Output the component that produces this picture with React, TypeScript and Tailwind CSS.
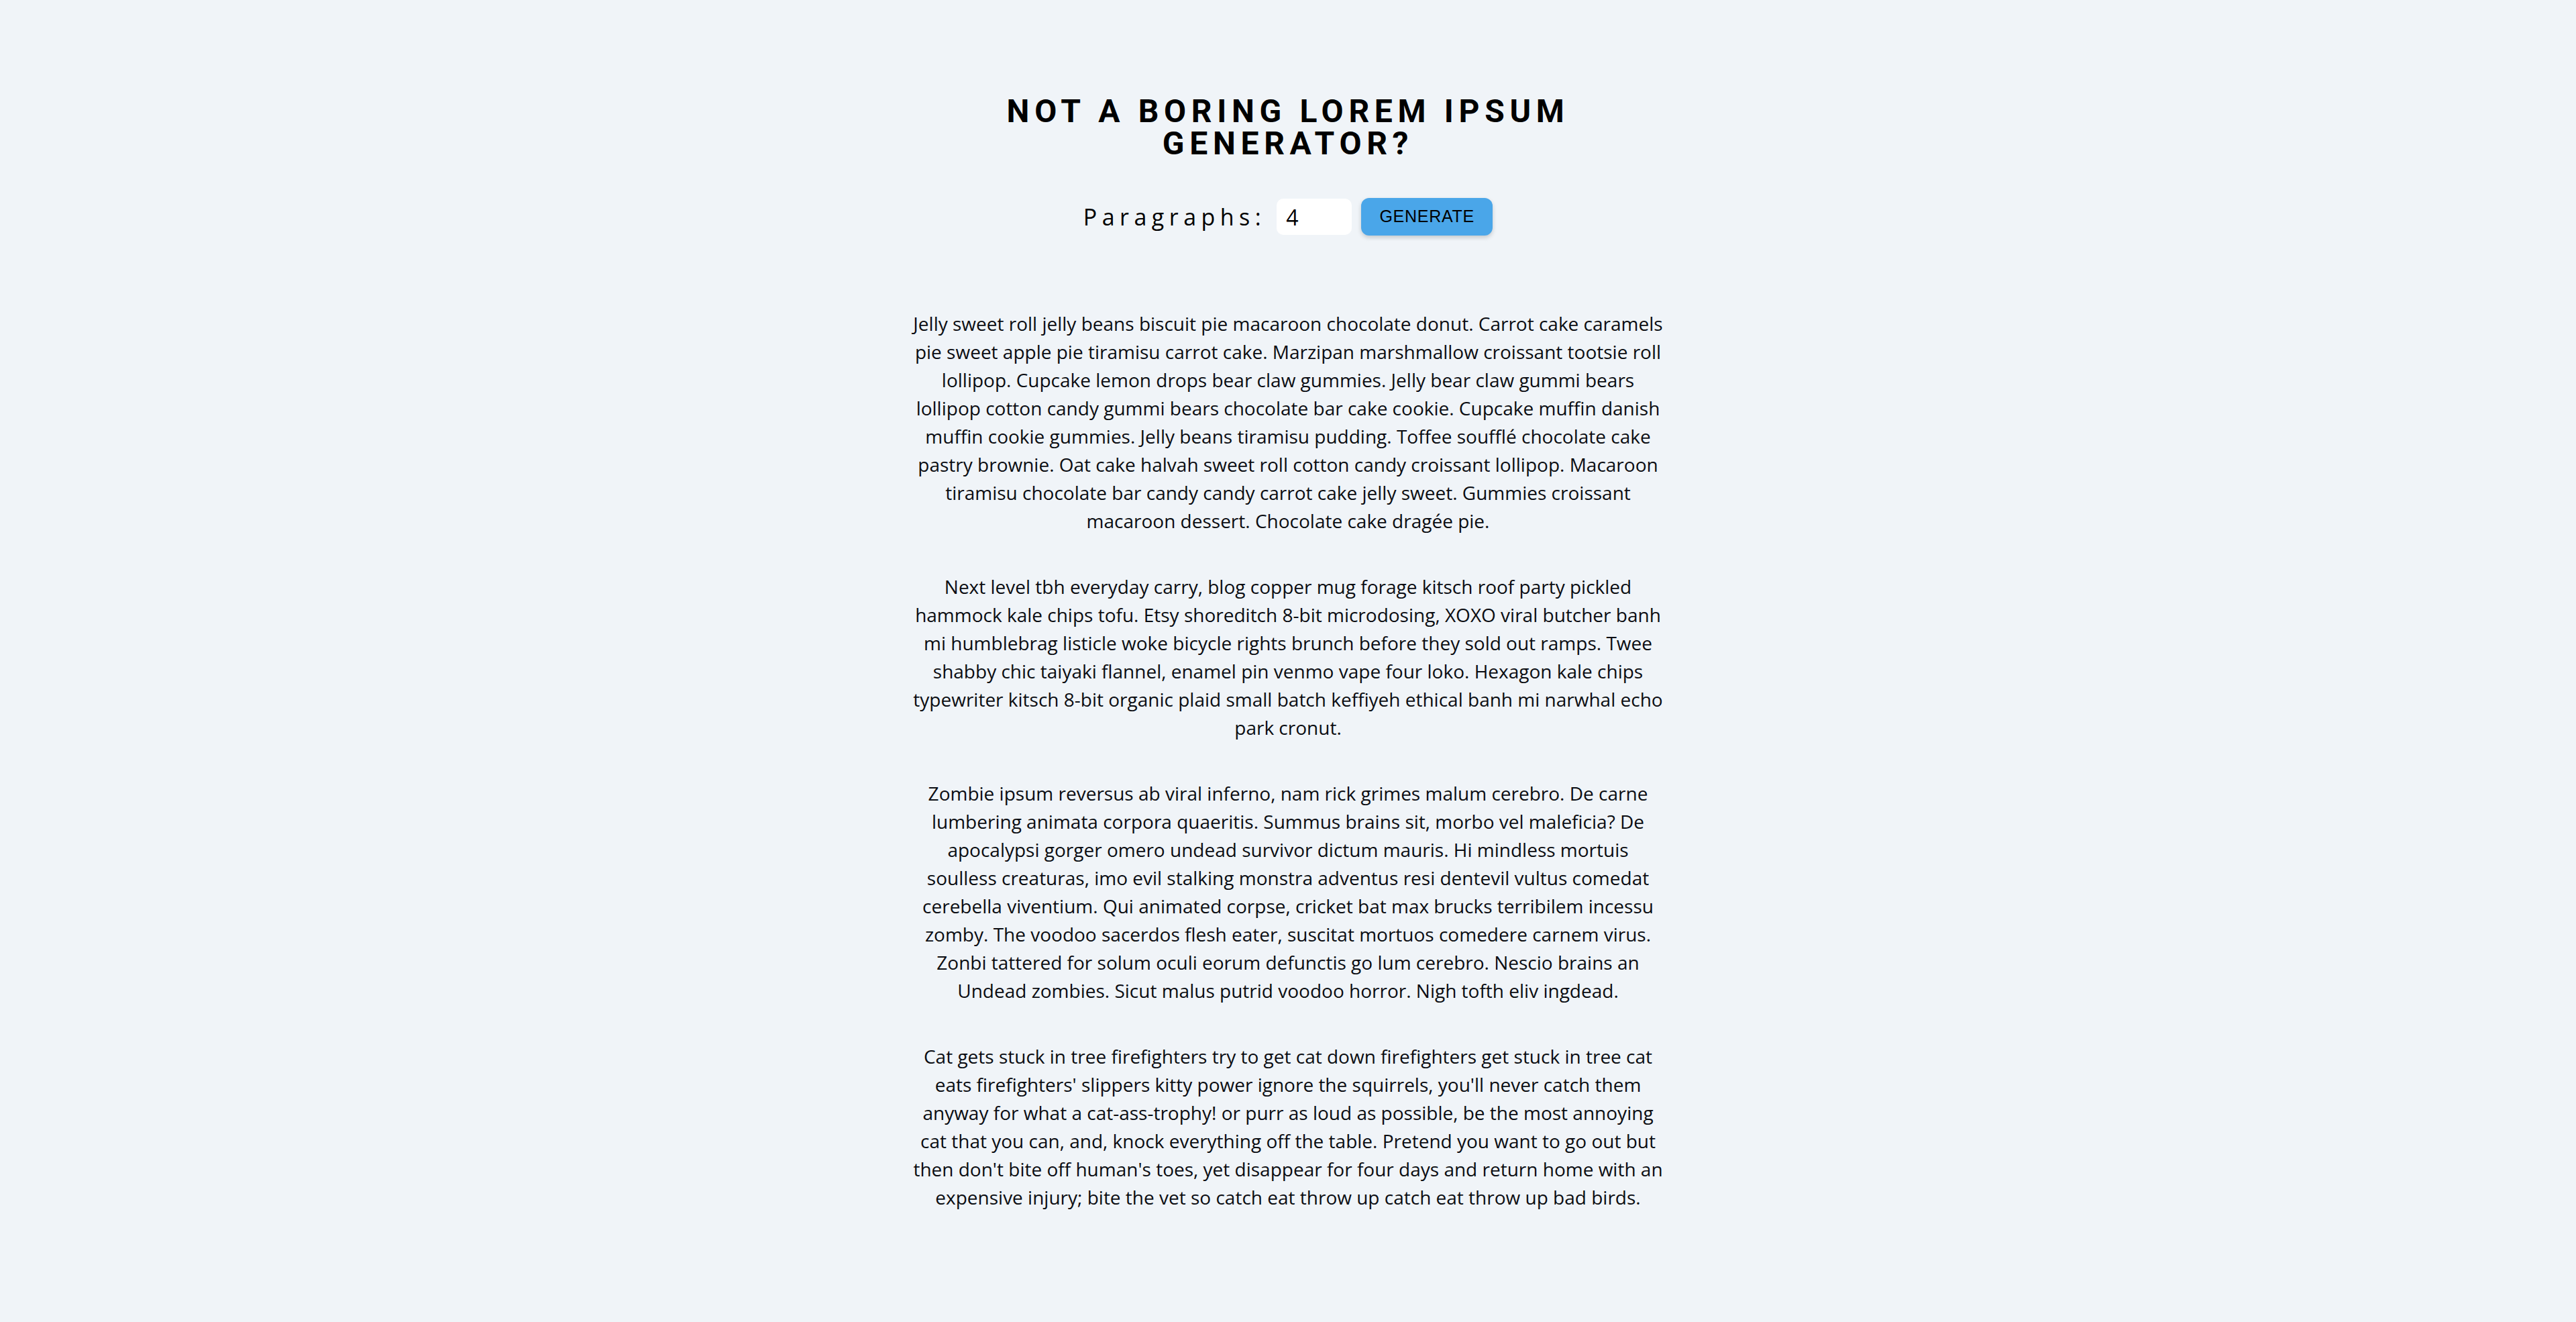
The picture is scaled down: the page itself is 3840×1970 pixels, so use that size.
import React, { useState } from 'react';

const paragraphs: string[] = [
  'Jelly sweet roll jelly beans biscuit pie macaroon chocolate donut. Carrot cake caramels pie sweet apple pie tiramisu carrot cake. Marzipan marshmallow croissant tootsie roll lollipop. Cupcake lemon drops bear claw gummies. Jelly bear claw gummi bears lollipop cotton candy gummi bears chocolate bar cake cookie. Cupcake muffin danish muffin cookie gummies. Jelly beans tiramisu pudding. Toffee soufflé chocolate cake pastry brownie. Oat cake halvah sweet roll cotton candy croissant lollipop. Macaroon tiramisu chocolate bar candy candy carrot cake jelly sweet. Gummies croissant macaroon dessert. Chocolate cake dragée pie.',
  'Next level tbh everyday carry, blog copper mug forage kitsch roof party pickled hammock kale chips tofu. Etsy shoreditch 8-bit microdosing, XOXO viral butcher banh mi humblebrag listicle woke bicycle rights brunch before they sold out ramps. Twee shabby chic taiyaki flannel, enamel pin venmo vape four loko. Hexagon kale chips typewriter kitsch 8-bit organic plaid small batch keffiyeh ethical banh mi narwhal echo park cronut.',
  'Zombie ipsum reversus ab viral inferno, nam rick grimes malum cerebro. De carne lumbering animata corpora quaeritis. Summus brains sit, morbo vel maleficia? De apocalypsi gorger omero undead survivor dictum mauris. Hi mindless mortuis soulless creaturas, imo evil stalking monstra adventus resi dentevil vultus comedat cerebella viventium. Qui animated corpse, cricket bat max brucks terribilem incessu zomby. The voodoo sacerdos flesh eater, suscitat mortuos comedere carnem virus. Zonbi tattered for solum oculi eorum defunctis go lum cerebro. Nescio brains an Undead zombies. Sicut malus putrid voodoo horror. Nigh tofth eliv ingdead.',
  "Cat gets stuck in tree firefighters try to get cat down firefighters get stuck in tree cat eats firefighters' slippers kitty power ignore the squirrels, you'll never catch them anyway for what a cat-ass-trophy! or purr as loud as possible, be the most annoying cat that you can, and, knock everything off the table. Pretend you want to go out but then don't bite off human's toes, yet disappear for four days and return home with an expensive injury; bite the vet so catch eat throw up catch eat throw up bad birds.",
];

const App: React.FC = () => {
  const [count, setCount] = useState<string>('4');
  const [shown, setShown] = useState<number>(4);

  const handleSubmit = (e: React.FormEvent) => {
    e.preventDefault();
    const n = parseInt(count, 10);
    setShown(Number.isNaN(n) ? 0 : Math.max(0, Math.min(n, paragraphs.length)));
  };

  return (
    <div className="min-h-screen bg-[#f0f4f8] text-black">
      <section className="mx-auto w-[1120px] pt-[142px] pb-[80px] text-center">
        <h1 className="font-['Roboto',sans-serif] text-[48px] leading-[48px] font-bold uppercase tracking-[0.16em]">
          Not a boring lorem ipsum generator?
        </h1>

        <form onSubmit={handleSubmit} className="mt-[57px] flex items-center justify-center">
          <label
            htmlFor="amount"
            className="font-['Open_Sans',sans-serif] text-[34px] leading-[40px] tracking-[0.22em]"
          >
            Paragraphs:
          </label>
          <input
            id="amount"
            type="number"
            value={count}
            onChange={(e) => setCount(e.target.value)}
            className="ml-[16px] h-[54px] w-[112px] appearance-none rounded-[10px] bg-white px-[14px] font-['Open_Sans',sans-serif] text-[32px] outline-none [&::-webkit-inner-spin-button]:appearance-none"
          />
          <button
            type="submit"
            className="ml-[14px] h-[56px] w-[196px] rounded-[12px] bg-[#4aa6e9] font-['Liberation_Sans',Arial,sans-serif] text-[25px] tracking-[0.03em] uppercase shadow-[0_3px_6px_rgba(0,0,0,0.18)]"
          >
            Generate
          </button>
        </form>

        <article className="mt-[110px] font-['Open_Sans',sans-serif] text-[28px] leading-[42px] text-[#0b0d12]">
          {paragraphs.slice(0, shown).map((p, i) => (
            <p key={i} className="mb-[56px]">
              {p}
            </p>
          ))}
        </article>
      </section>
    </div>
  );
};

export default App;
